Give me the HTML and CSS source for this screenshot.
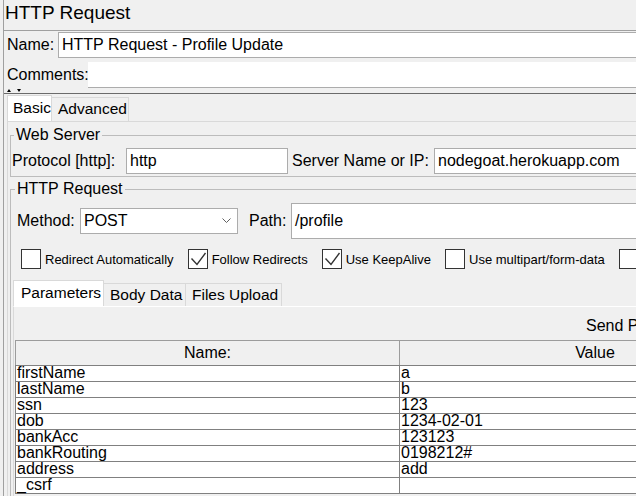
FILE: index.html
```html
<!DOCTYPE html>
<html>
<head>
<meta charset="utf-8">
<link rel="stylesheet" href="styles.css">
</head>
<body>
<div class="app">
  <div class="title">HTTP Request</div>
  <div class="namepanel">
    <div class="row name-row">
      <div class="lbl name-lbl">Name:</div>
      <div class="field name-field">HTTP Request - Profile Update</div>
    </div>
    <div class="row comments-row">
      <div class="lbl comments-lbl">Comments:</div>
      <div class="comments-field"></div>
    </div>
  </div>
  <div class="divider"><span class="arr-up"></span><span class="arr-down"></span></div>
  <div class="lower">
    <div class="tabs main-tabs">
      <div class="tab active">Basic</div>
      <div class="tab">Advanced</div>
    </div>
    <div class="tabpane">
      <fieldset class="group web-server">
        <legend>Web Server</legend>
        <div class="row proto-row">
          <div class="lbl proto-lbl">Protocol [http]:</div>
          <div class="field proto-field">http</div>
          <div class="lbl server-lbl">Server Name or IP:</div>
          <div class="field server-field">nodegoat.herokuapp.com</div>
        </div>
      </fieldset>
      <fieldset class="group http-req">
        <legend>HTTP Request</legend>
        <div class="row method-row">
          <div class="lbl method-lbl">Method:</div>
          <div class="combo">
            <span>POST</span>
            <svg class="chev" width="9" height="6" viewBox="0 0 9 6"><path d="M0.5 0.5 L4.5 4.5 L8.5 0.5" fill="none" stroke="#606060" stroke-width="1"/></svg>
          </div>
          <div class="lbl path-lbl">Path:</div>
          <div class="field path-field">/profile</div>
        </div>
        <div class="row checks">
          <div class="chk"><span class="box"></span><span>Redirect Automatically</span></div>
          <div class="chk"><span class="box"><svg width="18" height="18" viewBox="0 0 18 18"><path d="M2.5 8.5 L8 14.5 L16.5 3" fill="none" stroke="#333" stroke-width="1.4"/></svg></span><span>Follow Redirects</span></div>
          <div class="chk"><span class="box"><svg width="18" height="18" viewBox="0 0 18 18"><path d="M2.5 8.5 L8 14.5 L16.5 3" fill="none" stroke="#333" stroke-width="1.4"/></svg></span><span>Use KeepAlive</span></div>
          <div class="chk"><span class="box"></span><span>Use multipart/form-data</span></div>
          <div class="chk"><span class="box"></span><span>Browser-compatible headers</span></div>
        </div>
        <div class="params">
          <div class="tabs param-tabs">
            <div class="tab active">Parameters</div>
            <div class="tab">Body Data</div>
            <div class="tab">Files Upload</div>
          </div>
          <div class="ppane">
            <div class="send">Send Parameters With the Request:</div>
            <table class="grid">
              <thead>
                <tr><th class="c-name">Name:</th><th class="c-val">Value</th></tr>
              </thead>
              <tbody>
                <tr><td>firstName</td><td>a</td></tr>
                <tr><td>lastName</td><td>b</td></tr>
                <tr><td>ssn</td><td>123</td></tr>
                <tr><td>dob</td><td>1234-02-01</td></tr>
                <tr><td>bankAcc</td><td>123123</td></tr>
                <tr><td>bankRouting</td><td>0198212#</td></tr>
                <tr><td>address</td><td>add</td></tr>
                <tr><td>_csrf</td><td></td></tr>
              </tbody>
            </table>
          </div>
        </div>
      </fieldset>
    </div>
  </div>
</div>
</body>
</html>
```

FILE: styles.css
```css
html, body {
  margin: 0;
  padding: 0;
}
body {
  background: #f0f0f0;
  overflow: hidden;
  width: 636px;
  height: 496px;
  padding-left: 3px;
  box-sizing: border-box;
  font-family: "Liberation Sans", Arial, sans-serif;
  font-size: 16px;
  color: #000;
}
.app {
  width: 800px;
  height: 496px;
  border-left: 1px solid #a0a0a0;
}
.title {
  height: 30px;
  line-height: 26px;
  font-size: 19px;
  padding-left: 1px;
}
.namepanel {
  border-top: 1px solid #a0a0a0;
  padding-top: 1px;
}
.row {
  display: flex;
  align-items: center;
}
.lbl {
  white-space: nowrap;
  flex: none;
}
.field {
  box-sizing: border-box;
  background: #fff;
  border: 1px solid #acacac;
  padding-left: 3px;
  white-space: nowrap;
  display: flex;
  align-items: center;
}
.name-row {
  height: 26px;
}
.name-lbl {
  width: 54px;
  padding-left: 3px;
  box-sizing: border-box;
}
.name-field {
  flex: 1;
  height: 26px;
  border-right: none;
}
.comments-row {
  height: 26px;
  margin-top: 4px;
}
.comments-lbl {
  width: 84px;
  padding-left: 3px;
  box-sizing: border-box;
}
.comments-field {
  flex: 1;
  height: 26px;
  box-sizing: border-box;
  background: #fff;
  border-bottom: 1px solid #acacac;
}
.divider {
  height: 5px;
  border-bottom: 1px solid #6b6b6b;
  display: flex;
  align-items: center;
  padding-left: 3px;
  gap: 6px;
}
.arr-up {
  width: 0;
  height: 0;
  border-left: 2.5px solid transparent;
  border-right: 2.5px solid transparent;
  border-bottom: 3px solid #000;
}
.arr-down {
  width: 0;
  height: 0;
  border-left: 2.5px solid transparent;
  border-right: 2.5px solid transparent;
  border-top: 3px solid #000;
}
.tabs {
  display: flex;
  align-items: flex-end;
}
.tab {
  box-sizing: border-box;
  height: 24px;
  border: 1px solid #d9d9d9;
  border-bottom: none;
  background: #f0f0f0;
  font-size: 15.5px;
  line-height: 22px;
  padding: 0 4px 0 5px;
  white-space: nowrap;
}
.tab.active {
  height: 26px;
  background: #fff;
  line-height: 23px;
}
.main-tabs {
  margin-top: 1px;
  padding-left: 3px;
}
.main-tabs .tab.active {
  width: 45px;
}
.main-tabs .tab + .tab {
  border-left: none;
  width: 77px;
  padding-left: 6px;
}
.tabpane {
  margin-left: 3px;
  border-top: 1px solid #d9d9d9;
  border-left: 1px solid #d9d9d9;
  height: 400px;
}
.group {
  margin: 0 0 0 2px;
  padding: 0;
  border: 1px solid #bcbcbc;
  min-width: 0;
}
.group legend {
  font-size: 16px;
  line-height: 18px;
  padding: 0 2px;
  margin-left: 2px;
}
.web-server {
  margin-top: 4px;
  padding: 4px 0 2px 1px;
}
.proto-row {
  height: 26px;
}
.proto-lbl {
  width: 114px;
}
.proto-field {
  width: 162px;
  height: 26px;
}
.server-lbl {
  width: 142px;
  margin-left: 4px;
}
.server-field {
  flex: 1;
  height: 26px;
  border-right: none;
}
.http-req {
  margin-top: 3px;
  padding: 5px 0 0 2px;
  border-bottom: none;
}
.method-row {
  height: 36px;
  padding-left: 4px;
}
.method-lbl {
  width: 63px;
}
.combo {
  box-sizing: border-box;
  width: 158px;
  height: 26px;
  background: #fff;
  border: 1px solid #acacac;
  display: flex;
  align-items: center;
  justify-content: space-between;
  padding: 0 6px 0 3px;
}
.chev {
  display: block;
}
.path-lbl {
  width: 42px;
  margin-left: 11px;
}
.path-field {
  flex: 1;
  height: 36px;
  border-right: none;
}
.checks {
  margin-top: 10px;
  height: 20px;
  padding-left: 8px;
  gap: 14px;
  font-size: 13px;
}
.chk {
  display: flex;
  align-items: center;
  gap: 4px;
  white-space: nowrap;
}
.box {
  box-sizing: border-box;
  width: 20px;
  height: 20px;
  border: 1px solid #333;
  background: #fff;
  display: block;
}
.box svg {
  display: block;
}
.params {
  margin-top: 11px;
}
.param-tabs .tab {
  height: 23px;
  line-height: 21px;
}
.param-tabs .tab.active {
  height: 26px;
  width: 91px;
  line-height: 24px;
  padding-left: 7px;
}
.param-tabs .tab + .tab {
  border-left: none;
}
.param-tabs .tab:nth-child(2) {
  width: 82px;
  padding-left: 6px;
}
.param-tabs .tab:nth-child(3) {
  width: 96px;
  padding-left: 6px;
}
.ppane {
  border-top: 1px solid #fff;
  border-left: 1px solid #d9d9d9;
  padding-top: 8px;
  height: 300px;
}
.send {
  height: 25px;
  line-height: 22px;
  padding-left: 572px;
  white-space: nowrap;
}
.grid {
  margin-left: 1px;
  border-collapse: collapse;
  width: 776px;
  table-layout: fixed;
  background: #fff;
}
.grid th {
  box-sizing: border-box;
  height: 25px;
  background: #f0f0f0;
  font-weight: normal;
  font-size: 16px;
  border: 1px solid #9c9c9c;
  border-bottom: 1px solid #808080;
  padding: 0;
  text-align: center;
}
.grid th.c-name {
  width: 384px;
}
.grid td {
  height: 16px;
  line-height: 14px;
  padding: 0 0 0 1px;
  border: 1px solid #808080;
  font-size: 16px;
  white-space: nowrap;
  vertical-align: top;
  box-sizing: border-box;
}
```
